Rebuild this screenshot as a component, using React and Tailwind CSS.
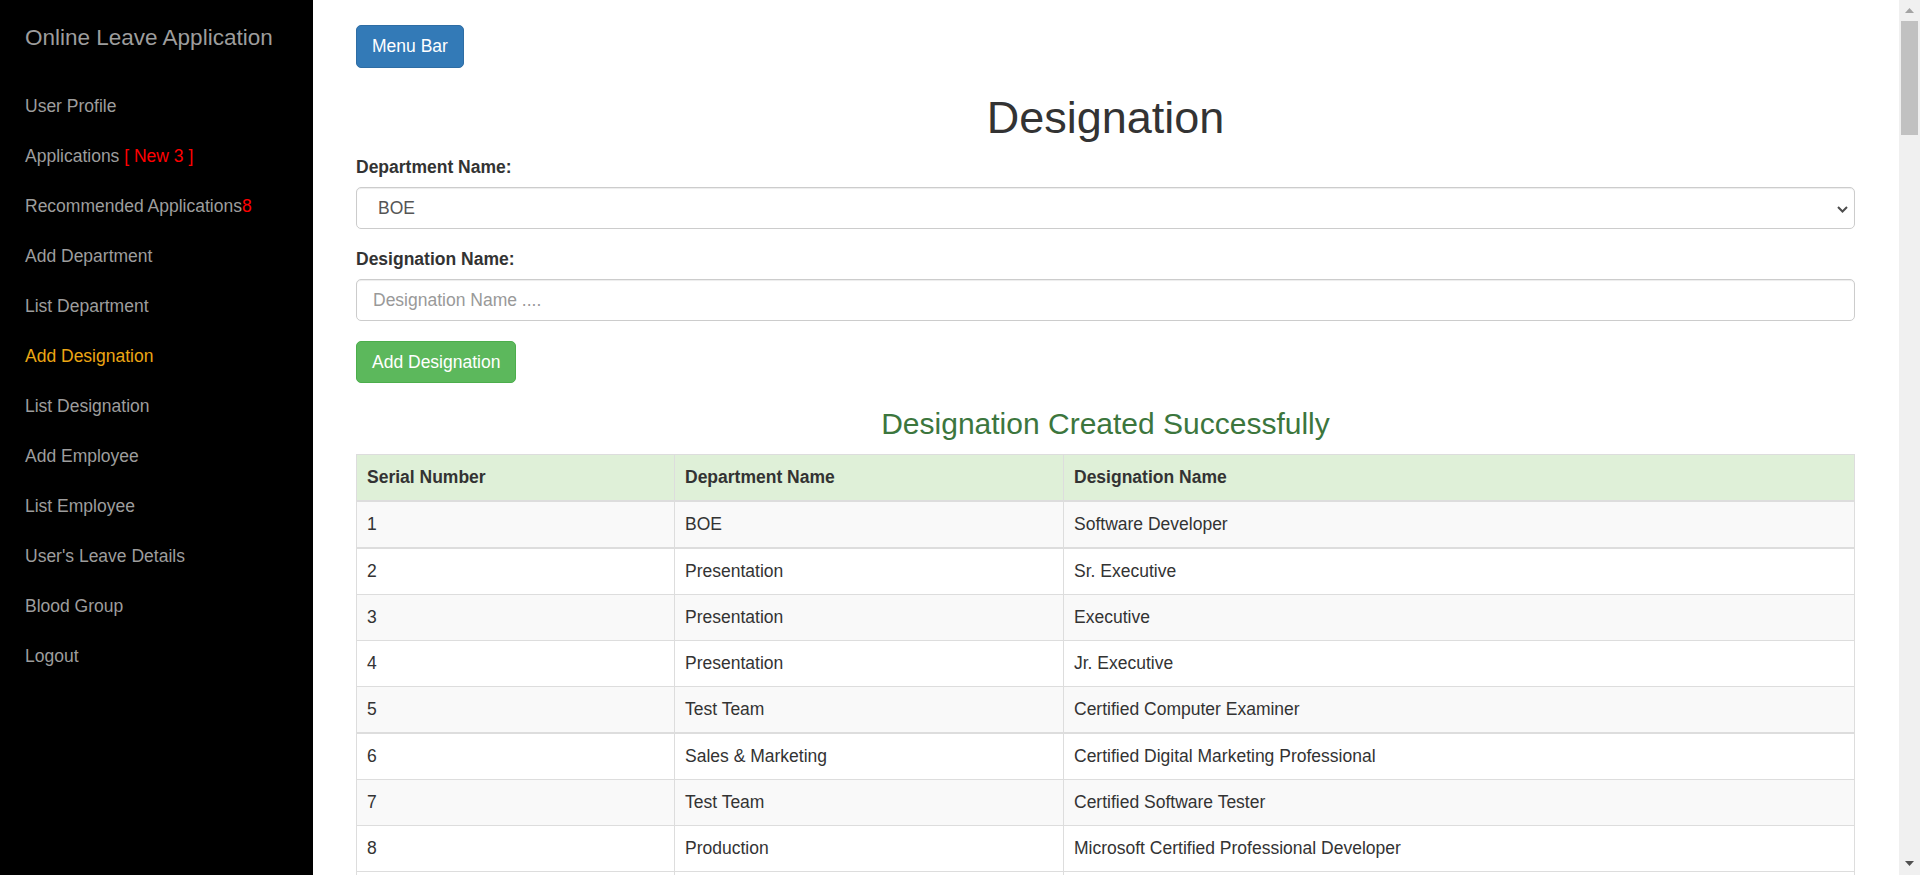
import React from 'react'

const navItems = [
  { label: 'User Profile' },
  { label: 'Applications ', badge: '[ New 3 ]' },
  { label: 'Recommended Applications', badge: '8' },
  { label: 'Add Department' },
  { label: 'List Department' },
  { label: 'Add Designation', active: true },
  { label: 'List Designation' },
  { label: 'Add Employee' },
  { label: 'List Employee' },
  { label: "User's Leave Details" },
  { label: 'Blood Group' },
  { label: 'Logout' },
]

const rows = [
  ['1', 'BOE', 'Software Developer'],
  ['2', 'Presentation', 'Sr. Executive'],
  ['3', 'Presentation', 'Executive'],
  ['4', 'Presentation', 'Jr. Executive'],
  ['5', 'Test Team', 'Certified Computer Examiner'],
  ['6', 'Sales & Marketing', 'Certified Digital Marketing Professional'],
  ['7', 'Test Team', 'Certified Software Tester'],
  ['8', 'Production', 'Microsoft Certified Professional Developer'],
]

function Sidebar() {
  return (
    <aside className="w-[313px] shrink-0 bg-black text-[#9d9d9d]">
      <div className="mt-[25px] mb-[31px] pl-[25px] text-[22.5px] leading-[25px]">Online Leave Application</div>
      <nav className="flex flex-col">
        {navItems.map((item) => (
          <a
            key={item.label}
            href="#"
            className={`flex h-[50px] items-center pl-[25px] text-[17.5px] leading-[25px] ${item.active ? 'text-[#eca614]' : 'text-[#9d9d9d]'}`}
          >
            <span className="whitespace-pre">
              {item.label}
              {item.badge && <span className="text-[#ff0000]">{item.badge}</span>}
            </span>
          </a>
        ))}
      </nav>
    </aside>
  )
}

function Scrollbar() {
  return (
    <div className="flex w-[21px] shrink-0 flex-col bg-[#f0f0f0]">
      <div className="flex h-[21px] items-center justify-center">
        <svg width="9" height="5" viewBox="0 0 9 5">
          <path d="M0 5 L4.5 0 L9 5 Z" fill="#a3a3a3" />
        </svg>
      </div>
      <div className="mx-[2px] h-[114px] bg-[#c1c1c1]" />
      <div className="flex-1" />
      <div className="flex h-[24px] items-center justify-center">
        <svg width="9" height="5" viewBox="0 0 9 5">
          <path d="M0 0 L9 0 L4.5 5 Z" fill="#505050" />
        </svg>
      </div>
    </div>
  )
}

function DesignationTable() {
  return (
    <table className="w-full border-collapse border border-[#ddd] text-left text-[17.5px] leading-[25px] text-[#333]">
      <thead>
        <tr className="bg-[#dff0d8]">
          <th className="w-[318px] border border-b-2 border-[#ddd] px-[10px] py-[10px] font-bold">Serial Number</th>
          <th className="w-[389px] border border-b-2 border-[#ddd] px-[10px] py-[10px] font-bold">Department Name</th>
          <th className="border border-b-2 border-[#ddd] px-[10px] py-[10px] font-bold">Designation Name</th>
        </tr>
      </thead>
      <tbody>
        {rows.map((r, i) => {
          const thick = i === 0 || i === 4
          const cell = `border border-[#ddd] px-[10px] py-[10px] ${thick ? 'border-b-2' : ''}`
          return (
            <tr key={r[0]} className={i % 2 === 0 ? 'bg-[#f9f9f9]' : 'bg-white'}>
              <td className={cell}>{r[0]}</td>
              <td className={cell}>{r[1]}</td>
              <td className={cell}>{r[2]}</td>
            </tr>
          )
        })}
        {/* next row starts right at the fold, only its top border shows */}
        <tr className="bg-white">
          <td className="h-[46px] border border-[#ddd]" />
          <td className="h-[46px] border border-[#ddd]" />
          <td className="h-[46px] border border-[#ddd]" />
        </tr>
      </tbody>
    </table>
  )
}

export default function App() {
  return (
    <div className="flex h-[875px] overflow-hidden bg-white font-['Liberation_Sans',Arial,sans-serif]">
      <Sidebar />
      <main className="min-w-0 flex-1 overflow-hidden pt-[25px] pr-[44px] pl-[43px] text-[#333]">
        <button
          type="button"
          className="h-[43px] rounded-[5px] border border-[#2e6da4] bg-[#337ab7] px-[15px] text-[17.5px] leading-[25px] text-white"
        >
          Menu Bar
        </button>
        <h1 className="mt-[25px] text-center text-[45px] leading-[49.5px] font-normal text-[#333]">Designation</h1>
        <form className="mt-[12.5px]" onSubmit={(e) => e.preventDefault()}>
          <label className="mb-[7px] block text-[17.5px] leading-[25px] font-bold">Department Name:</label>
          <div className="relative">
            <select
              defaultValue="BOE"
              className="block h-[42px] w-full appearance-none rounded-[5px] border border-[#ccc] bg-white pl-[21px] text-[17.5px] text-[#555] shadow-[inset_0_1px_1px_rgba(0,0,0,0.075)] outline-none"
            >
              <option>BOE</option>
              <option>Presentation</option>
              <option>Test Team</option>
              <option>Sales &amp; Marketing</option>
              <option>Production</option>
            </select>
            <svg
              className="pointer-events-none absolute top-[19px] right-[7px]"
              width="11"
              height="7"
              viewBox="0 0 11 7"
            >
              <path d="M1 1 L5.5 5.5 L10 1" fill="none" stroke="#4d4d4d" strokeWidth="2" />
            </svg>
          </div>
          <label className="mt-[18px] mb-[7px] block text-[17.5px] leading-[25px] font-bold">Designation Name:</label>
          <input
            type="text"
            placeholder="Designation Name ...."
            className="block h-[42px] w-full rounded-[5px] border border-[#ccc] bg-white px-[16px] text-[17.5px] text-[#555] shadow-[inset_0_1px_1px_rgba(0,0,0,0.075)] outline-none placeholder:text-[#999]"
          />
          <button
            type="submit"
            className="mt-[20px] h-[42px] rounded-[5px] border border-[#4cae4c] bg-[#5cb85c] px-[15px] text-[17.5px] leading-[25px] text-white"
          >
            Add Designation
          </button>
        </form>
        <h3 className="mt-[24px] mb-[14px] text-center text-[30px] leading-[33px] text-[#3c763d]">
          Designation Created Successfully
        </h3>
        <DesignationTable />
      </main>
      <Scrollbar />
    </div>
  )
}
